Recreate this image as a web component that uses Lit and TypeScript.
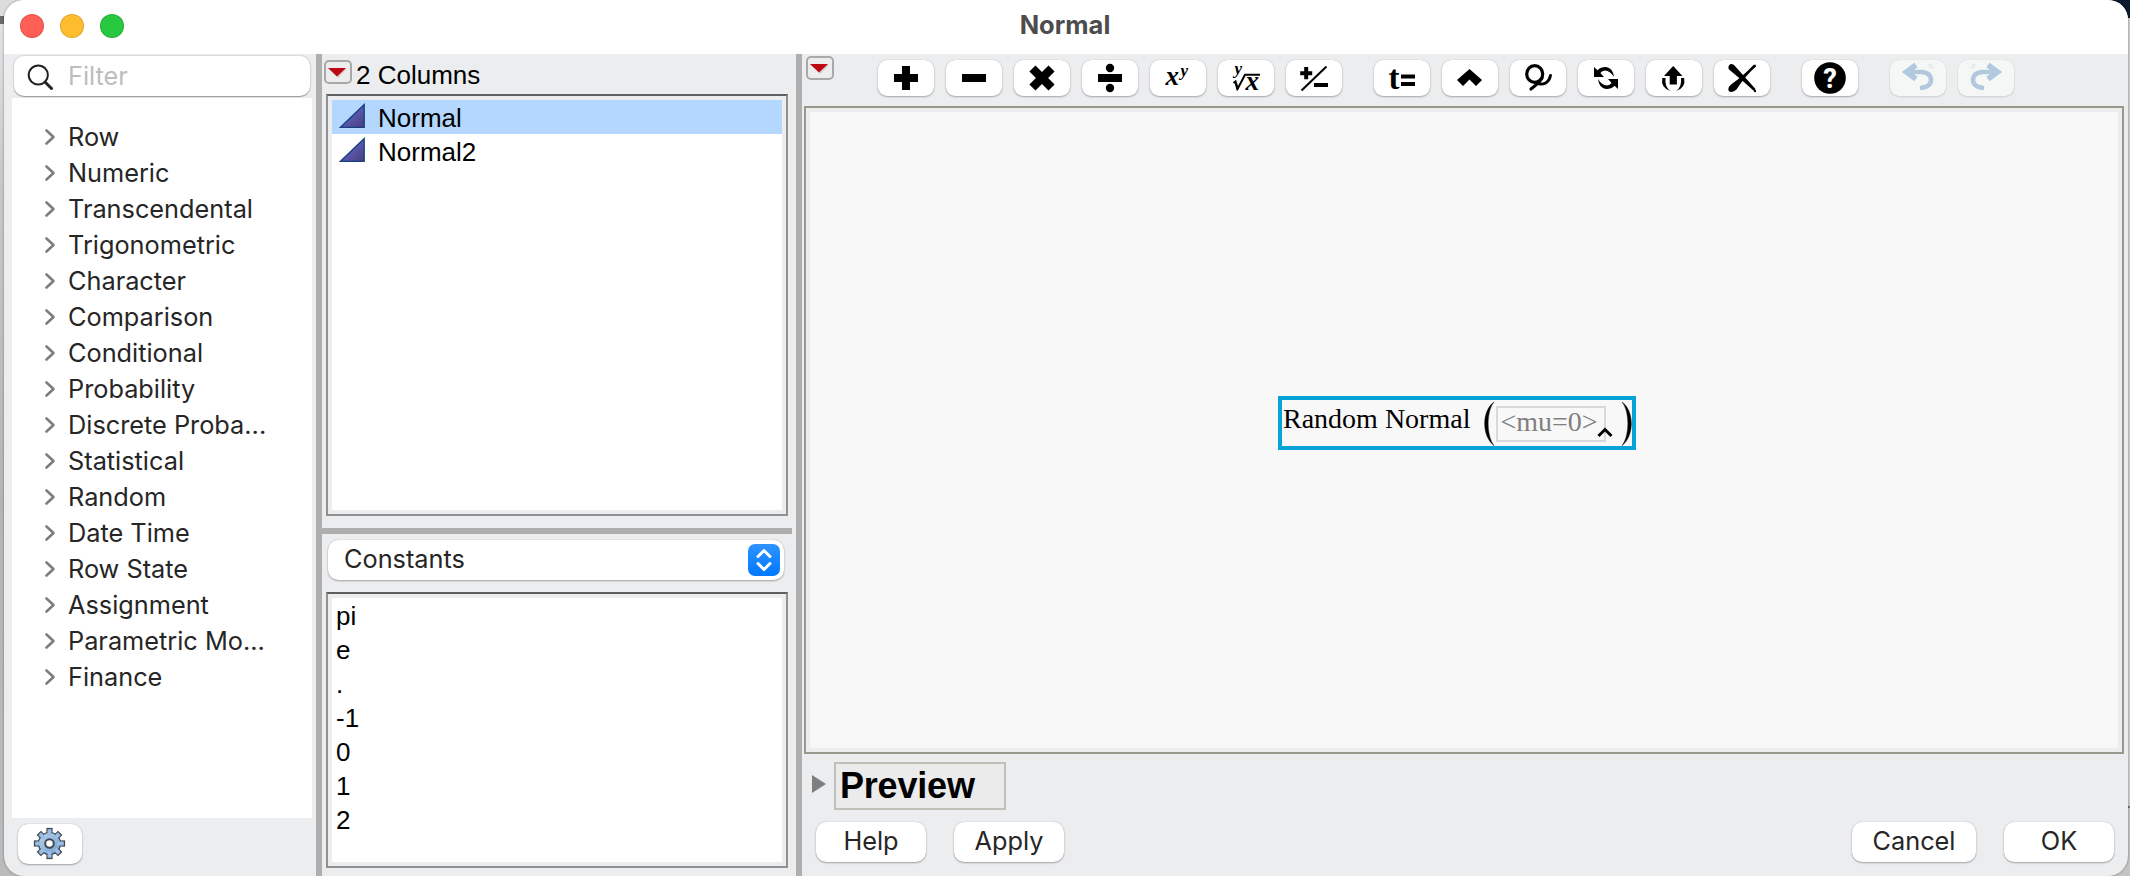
import { LitElement, html, css, svg, SVGTemplateResult } from "lit";
import { customElement, property } from "lit/decorators.js";

const CATEGORIES = [
  "Row", "Numeric", "Transcendental", "Trigonometric", "Character", "Comparison",
  "Conditional", "Probability", "Discrete Proba...", "Statistical", "Random",
  "Date Time", "Row State", "Assignment", "Parametric Mo...", "Finance",
];
const CONSTANTS = ["pi", "e", ".", "-1", "0", "1", "2"];
const COLUMNS = ["Normal", "Normal2"];

const swapArrow = svg`<path d="M16 7L19.500 10.200Q23 6.700 28 7Q35 8 36 17Q32 10.500 27 10.500Q24 10.700 22.400 13L26 17H16Z"/>`;
const bend = svg`<path d="M15.500 12H32Q41 13 41 20Q41 27 30 28" fill="none" stroke="#b2c8df" stroke-width="4.500"/><path d="M26 5L16.500 12L26 19" fill="none" stroke="#b2c8df" stroke-width="5.500"/><path d="M38 6l4 -2M40 8l3-1" stroke="#dfe5ea" stroke-width="1.500"/>`;

const ICONS: Record<string, SVGTemplateResult> = {
  plus: svg`<path d="M24 6h8v8h8v8h-8v8h-8v-8h-8v-8h8z"/>`,
  minus: svg`<path d="M16 14h24v8H16z"/>`,
  times: svg`<path transform="rotate(45 28 18)" d="M23.700 4.500h8.600v9.200h9.200v8.600h-9.200v9.200h-8.600v-9.200h-9.200v-8.600h9.200z"/>`,
  divide: svg`<path d="M16 14h24v8H16z"/><circle cx="28" cy="8" r="4.200"/><circle cx="28" cy="28" r="4.200"/>`,
  power: svg`<text class="math" x="15.500" y="25" font-size="27">x</text><text class="math" x="30.500" y="16" font-size="17">y</text>`,
  root: svg`<text class="math" x="16.500" y="14" font-size="17">y</text><path d="M15.500 23l2-1.500l2.300 7L27 14.800H42" fill="none" stroke="#000" stroke-width="2"/><path d="M16.500 22.500l2.300 8.500l2-4z"/><text class="math" x="27.500" y="30" font-size="27">x</text>`,
  sign: svg`<path d="M18.200 7h4v4.200h4v4h-4v4h-4v-4h-4v-4h4zM28 23h14v4H28z"/><path d="M15.500 30.500L40.500 6.500" stroke="#000" stroke-width="2"/>`,
  local: svg`<text class="tee" x="14.500" y="29" font-size="33">t</text><path d="M27 14.500h14v4H27zM27 22h14v4H27z"/>`,
  caret: svg`<path d="M27.500 9L40 20l-6 6l-6.500-6.500L21 26l-6-6z"/>`,
  loop: svg`<ellipse cx="24.700" cy="14" rx="8" ry="8.300" fill="none" stroke="#000" stroke-width="3.200"/><path d="M32 18Q29 23 21 29" fill="none" stroke="#000" stroke-width="3.200" stroke-linecap="round"/><path d="M26 23.300Q38 26.500 40.500 15.500" fill="none" stroke="#000" stroke-width="3" stroke-linecap="round"/>`,
  swap: svg`${swapArrow}<g transform="rotate(180 28 18)">${swapArrow}</g>`,
  peel: svg`<path d="M27.200 6l9.300 10h-5.600v8.500h-7.200V16h-5.700z"/><path d="M19.500 18Q18.500 27 24.500 31Q14.500 28 16.300 18zM35 18Q36 27 30 31Q40 28 38.200 18z"/>`,
  erase: svg`<path d="M14.500 6.500Q16 2.500 20 5Q29 15 41.500 29L40 31Q28 20 15 9.500Q14 8 14.500 6.500z"/><path d="M41.500 4.500L42 6.500Q32 15 22.500 29.500Q19 33 15 31.500Q13 28 17 24.500Q28 17 39.500 5z"/><circle cx="41" cy="31" r="1.200"/>`,
  help: svg`<circle cx="28" cy="18" r="15.800"/><text class="mark" x="28" y="27.500" font-size="27" text-anchor="middle">?</text>`,
  undo: bend,
  redo: svg`<g transform="translate(56 0) scale(-1 1)">${bend}</g>`,
};

@customElement("tool-button")
class ToolButton extends LitElement {
  @property() icon = "";
  @property({ type: Boolean }) off = false;
  static styles = css`
    :host { display: block; }
    button { display: block; width: 56px; height: 36px; padding: 0; border: 0; border-radius: 9px; background: #fff; box-shadow: 0 0 1px rgba(0,0,0,.28), 0 1px 2px rgba(0,0,0,.28); }
    button:disabled { background: #f5f7f6; box-shadow: 0 0 1px rgba(0,0,0,.15), 0 1px 2px rgba(0,0,0,.12); }
    svg { display: block; width: 56px; height: 36px; }
    .math { font-family: "Liberation Serif", serif; font-style: italic; font-weight: bold; }
    .tee { font-family: "Liberation Serif", serif; font-weight: bold; }
    .mark { font-family: "Roboto", sans-serif; font-weight: 800; fill: #fff; }
  `;
  render() {
    return html`<button ?disabled=${this.off} aria-label=${this.icon}><svg viewBox="0 0 56 36">${ICONS[this.icon]}</svg></button>`;
  }
}

@customElement("red-menu")
class RedMenu extends LitElement {
  static styles = css`
    :host { display: block; width: 28px; height: 24px; }
    svg { display: block; }
  `;
  render() {
    return html`<svg width="28" height="24" viewBox="0 0 28 24">
      <rect x="1" y="1" width="26" height="22" rx="4" fill="#ededee" stroke="#a9a9a9" stroke-width="2"/>
      <path d="M5 9h18l-9 9z" fill="#000" opacity=".12"/>
      <path d="M4 8h18l-9 8.500z" fill="#bd0712"/>
    </svg>`;
  }
}

@customElement("app-root")
class AppRoot extends LitElement {
  static styles = css`
    * { box-sizing: border-box; }
    :host { display: block; box-sizing: border-box; width: 2130px; height: 876px; overflow: hidden; padding: 0 2px 0 4px;
      background:
        linear-gradient(#0b1a2e 0 18px, #cfcfcf 18px 806px, #777 806px 808px, #c4c4c4 808px) right / 30px 100% no-repeat,
        linear-gradient(#dcdcdc 0 16px, #6b6b6b 16px 24px, #e2e2e2 24px, #c8c8c8 180px, #b5b5b5 500px, #bbb);
      font-family: "Inter", sans-serif; font-size: 25.3px; color: #262626; }
    .window { height: 876px; border-radius: 20px; overflow: hidden; background: #ecedef; display: flex; flex-direction: column; box-shadow: 0 0 2px rgba(0,0,0,.5); }
    .titlebar { height: 54px; flex: none; background: #fff; display: grid; grid-template-columns: 1fr auto 1fr; align-items: center; }
    .lights { display: flex; gap: 16px; padding: 0 0 2px 16px; }
    .light { width: 24px; height: 24px; border-radius: 50%; border: 1px solid rgba(0,0,0,.12); }
    .red { background: #ff5f57; } .amber { background: #febc2e; } .green { background: #28c840; }
    .title { font-weight: 700; font-size: 25.5px; color: #4c4c4c; line-height: 30px; padding: 0 2px 4px 0; }
    .body { flex: 1; display: flex; min-height: 0; }
    .split { width: 6px; flex: none; background: #aeaeae; }
    .left { width: 312px; flex: none; padding: 2px 4px 0 8px; display: flex; flex-direction: column; }
    .search { height: 40px; flex: none; margin: 0 2px; display: flex; align-items: center; background: #fff; border-radius: 10px; box-shadow: 0 0 1px 1px rgba(0,0,0,.08), 0 1px 1px rgba(0,0,0,.3); color: #bdbdbd; line-height: 40px; }
    .search svg { margin: 2px 14px 0 13px; }
    .tree { height: 720px; flex: none; margin: 2px 0 0; padding: 21px 0 0 32px; background: #fff; list-style: none; }
    .node { height: 36px; display: flex; align-items: center; gap: 12px; line-height: 36px; white-space: nowrap; }
    .gear { margin: 6px 0 0 6px; width: 64px; height: 40px; }
    .push { border: 0; padding: 0; border-radius: 10px; background: #fff; box-shadow: 0 0 1px rgba(0,0,0,.28), 0 1px 2px rgba(0,0,0,.3); font: inherit; color: inherit; display: block; flex: none; }
    .mid { width: 474px; flex: none; display: flex; flex-direction: column; }
    .mhead { height: 40px; flex: none; display: flex; padding: 6px 0 0 2px; gap: 4px; font: 26px/30px "Liberation Sans", sans-serif; color: #000; }
    .box { margin: 0 8px 0 4px; border: 2px solid #919191; border-top-color: #5f5f5f; padding: 4px; background: #ecedef; font: 26px/34px "Liberation Sans", sans-serif; color: #000; }
    .inner { background: #fff; height: 100%; }
    .cols { height: 422px; flex: none; }
    .col { height: 34px; display: flex; gap: 12px; padding-left: 7px; line-height: 36px; }
    .col svg { margin-top: 2px; }
    .col.sel { background: #b3d7ff; }
    .hsplit { height: 6px; flex: none; margin: 12px 4px 6px 0; background: #aeaeae; }
    .combo { height: 40px; flex: none; margin: 0 12px 12px 6px; padding: 0 4px 0 16px; background: #fff; border-radius: 10px; display: flex; align-items: center; justify-content: space-between; box-shadow: 0 0 1px rgba(0,0,0,.28), 0 1px 2px rgba(0,0,0,.3); line-height: 36px; }
    .combo span { padding-bottom: 2px; }
    .consts { height: 276px; flex: none; }
    .consts .inner { padding: 1px 0 0 4px; }
    .right { flex: 1; min-width: 0; padding: 0 4px 0 2px; display: flex; flex-direction: column; }
    .tools { height: 52px; flex: none; display: flex; gap: 12px; padding: 6px 0 0; align-items: flex-start; }
    .tools red-menu { margin: -4px 32px 0 2px; }
    .tools tool-button { flex: none; }
    .tools .gap { margin-left: 20px; }
    .canvas { height: 648px; flex: none; border: 2px solid #98988c; padding: 4px; }
    .paper { height: 100%; background: #f8f8f8; padding: 284px 0 0 468px; }
    .formula { width: 358px; height: 54px; border: 4px solid #05a3d6; display: flex; padding-left: 1px; font: 28px/38px "Liberation Serif", serif; color: #000; white-space: nowrap; }
    .paren { width: 12px; height: 46px; margin-left: 13px; flex: none; }
    .arg { width: 110px; height: 36px; flex: none; border: 2px solid #d8d8d8; margin: 6px 0 0 1px; padding-left: 2px; line-height: 28px; color: #808080; display: flex; }
    .arg svg { margin: 18px 0 0 -1px; flex: none; }
    .close { margin-left: 15px; }
    .preview { height: 48px; flex: none; margin: 8px 0 12px 8px; display: flex; }
    .preview svg { margin: 13px 8px 0 0; }
    .ptext { width: 172px; height: 48px; border: 2px solid #c0c0b9; background: #ebebeb; padding-left: 4px; font: bold 36px/43px "Liberation Sans", sans-serif; color: #000; letter-spacing: -.2px; }
    .actions { display: flex; gap: 28px; padding: 0 10px 0 12px; }
    .actions .push { width: 110px; height: 40px; line-height: 36px; padding-bottom: 2px; }
    .actions .cancel { margin-left: auto; width: 124px; }
  `;

  private gear() {
    return html`<svg width="64" height="40" viewBox="0 0 64 40">
      <defs><linearGradient id="g" x1="0" y1="0" x2="1" y2="1"><stop offset="0" stop-color="#b8d3ee"/><stop offset="1" stop-color="#719fcf"/></linearGradient></defs>
      <g transform="translate(31.500 19.500)" fill="#8db4de" stroke="#40464d" stroke-width="1.200">
        ${[0, 45, 90, 135, 180, 225, 270, 315].map((a) => svg`<rect x="-2.500" y=${a % 90 ? -14.5 : -15} width="5" height="7" transform="rotate(${a})"/>`)}
        <circle r="11" fill="url(#g)"/>
        <circle r="10.200" fill="url(#g)" stroke="none"/>
        ${[0, 45, 90, 135, 180, 225, 270, 315].map((a) => svg`<rect x="-1.900" y="-13" width="3.800" height="5" transform="rotate(${a})" fill="#9bbfe3" stroke="none"/>`)}
        <circle r="4.300" fill="#fff" stroke-width="2"/>
      </g></svg>`;
  }

  render() {
    return html`<div class="window">
      <div class="titlebar">
        <div class="lights"><span class="light red"></span><span class="light amber"></span><span class="light green"></span></div>
        <div class="title">Normal</div>
      </div>
      <div class="body">
        <div class="left">
          <div class="search">
            <svg width="27" height="27" viewBox="0 0 27 27" fill="none" stroke="#222"><circle cx="11.300" cy="11" r="9.600" stroke-width="2"/><path d="M18 18l6.500 6.500" stroke-width="3" stroke-linecap="round"/></svg>
            <span>Filter</span>
          </div>
          <ul class="tree">
            ${CATEGORIES.map((c) => html`<li class="node"><svg width="12" height="20" viewBox="0 0 12 20"><path d="M2.500 3.500L9.500 10l-7 6.500" fill="none" stroke="#7d7d7d" stroke-width="2.600" stroke-linecap="round" stroke-linejoin="round"/></svg><span>${c}</span></li>`)}
          </ul>
          <button class="push gear" aria-label="settings">${this.gear()}</button>
        </div>
        <div class="split"></div>
        <div class="mid">
          <div class="mhead"><red-menu></red-menu><span>2 Columns</span></div>
          <div class="box cols"><div class="inner">
            ${COLUMNS.map((c, i) => html`<div class="col ${i ? "" : "sel"}"><svg width="27" height="27" viewBox="0 0 27 27">
              <defs><linearGradient id="t" x1="0" y1="0" x2="1" y2="1"><stop offset=".3" stop-color="#6560c0"/><stop offset="1" stop-color="#45407c"/></linearGradient></defs>
              <path d="M1.500 25.300L25.200 2.500V25.300z" fill="url(#t)" stroke="#153f80" stroke-width="1.300"/></svg><span>${c}</span></div>`)}
          </div></div>
          <div class="hsplit"></div>
          <div class="combo"><span>Constants</span>
            <svg width="32" height="32" viewBox="0 0 32 32"><defs><linearGradient id="b" x1="0" y1="0" x2="0" y2="1"><stop offset="0" stop-color="#2f93ff"/><stop offset="1" stop-color="#0078ff"/></linearGradient></defs>
              <rect width="32" height="32" rx="7" fill="url(#b)"/><path d="M10 12.500l6-6l6 6M10 19.500l6 6l6-6" fill="none" stroke="#fff" stroke-width="3" stroke-linecap="round" stroke-linejoin="round"/></svg>
          </div>
          <div class="box consts"><div class="inner">${CONSTANTS.map((c) => html`<div>${c}</div>`)}</div></div>
        </div>
        <div class="split"></div>
        <div class="right">
          <div class="tools">
            <red-menu></red-menu>
            ${["plus", "minus", "times", "divide", "power", "root", "sign"].map((i) => html`<tool-button icon=${i}></tool-button>`)}
            <tool-button class="gap" icon="local"></tool-button>
            ${["caret", "loop", "swap", "peel", "erase"].map((i) => html`<tool-button icon=${i}></tool-button>`)}
            <tool-button class="gap" icon="help"></tool-button>
            <tool-button class="gap" icon="undo" off></tool-button>
            <tool-button icon="redo" off></tool-button>
          </div>
          <div class="canvas"><div class="paper"><div class="formula">
            <span>Random Normal</span>
            <svg class="paren" viewBox="0 0 12 46"><path d="M11 2C-1.500 11 -1.500 36 11 45.700C3.200 36 3.200 11 11 2z" stroke="#000" stroke-width=".4"/></svg>
            <span class="arg"><span>&lt;mu=0&gt;</span><svg width="16" height="13" viewBox="0 0 16 13"><path d="M1.500 10L8 3.500l6.500 6.500" fill="none" stroke="#000" stroke-width="3"/></svg></span>
            <svg class="paren close" viewBox="0 0 12 46"><path d="M1 2C13.500 11 13.500 36 1 45.700C8.800 36 8.800 11 1 2z" stroke="#000" stroke-width=".4"/></svg>
          </div></div></div>
          <div class="preview">
            <svg width="14" height="18" viewBox="0 0 14 18"><path d="M0 0l14 9l-14 9z" fill="#7f7f7f"/></svg>
            <div class="ptext">Preview</div>
          </div>
          <div class="actions">
            <button class="push">Help</button><button class="push">Apply</button>
            <button class="push cancel">Cancel</button><button class="push">OK</button>
          </div>
        </div>
      </div>
    </div>`;
  }
}
